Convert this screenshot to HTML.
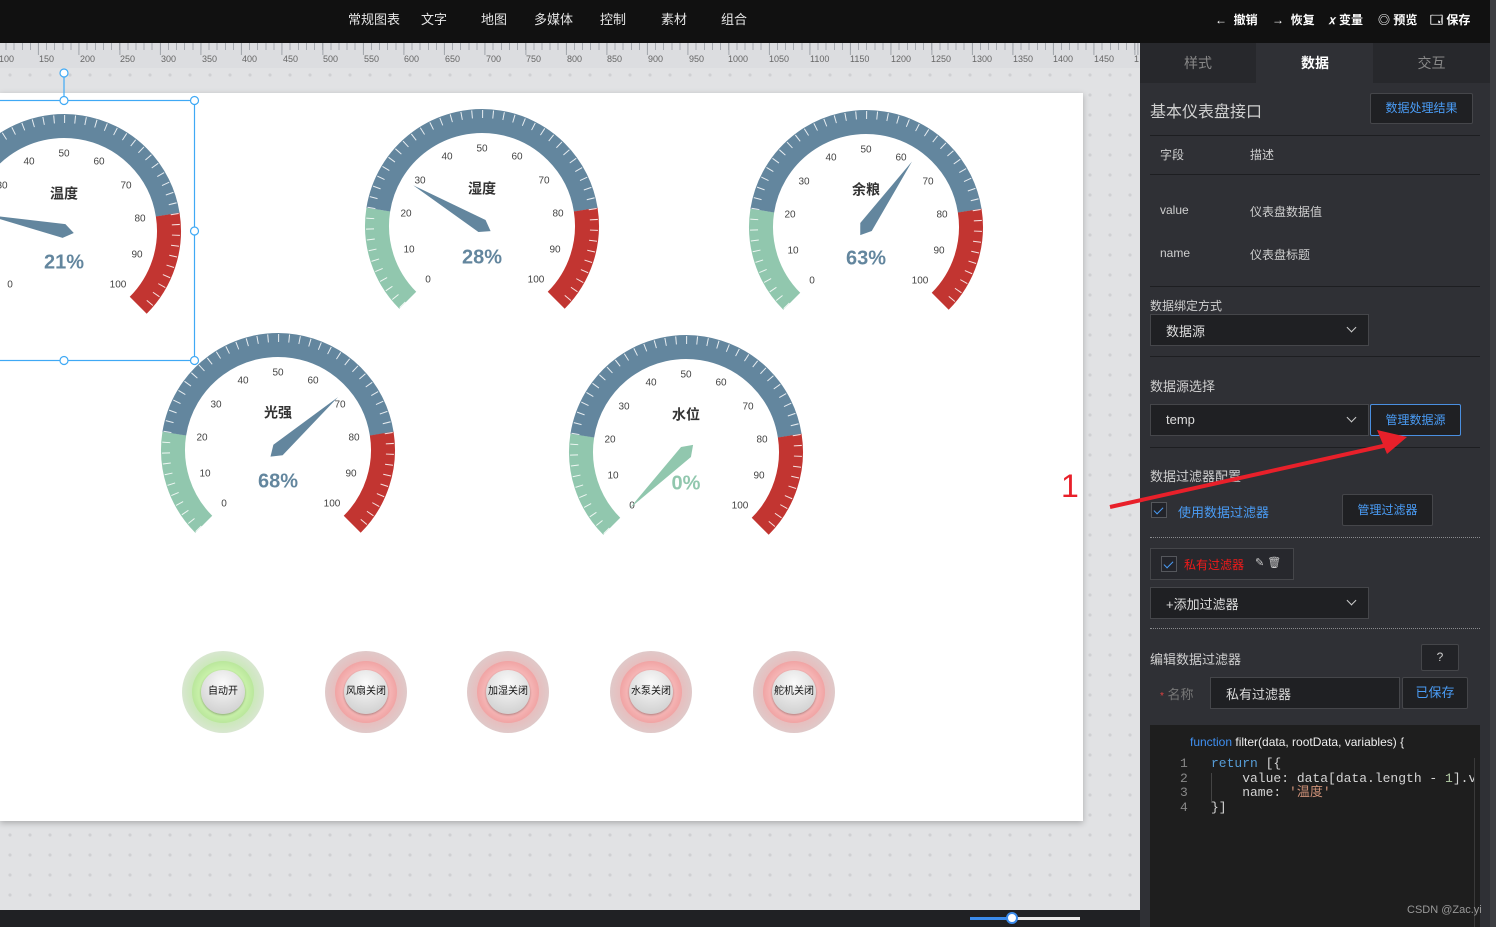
<!DOCTYPE html>
<html><head><meta charset="utf-8">
<style>
*{margin:0;padding:0;box-sizing:border-box}
body{width:1496px;height:927px;overflow:hidden;background:#e1e2e4;font-family:"Liberation Sans","Noto Sans CJK SC",sans-serif;position:relative}
.a{position:absolute;white-space:nowrap}
#top{left:0;top:0;width:1490px;height:43px;background:#111}
.nav{top:9px;font-size:13px;color:#e6e6e6}
.tb{top:11px;font-size:12px;color:#fff;font-weight:bold}
#canvas{left:0;top:43px;width:1140px;height:867px;background-color:#e1e2e4;background-image:radial-gradient(circle,#cfd0d3 1.2px,transparent 2px);background-size:20px 20px;background-position:0 2px}
#ruler{left:0;top:43px;width:1140px;height:25px;background:#dcdde0;
background-image:repeating-linear-gradient(90deg,#a8acb2 0 1px,transparent 1px 8.12px);background-size:100% 7px;background-repeat:no-repeat;background-position:-2.6px 0}
#ruler2{left:0;top:43px;width:1140px;height:12px;background-image:repeating-linear-gradient(90deg,#a0a4aa 0 1px,transparent 1px 40.6px);background-position:-2.6px 0}
.rl{top:54px;font-size:9px;color:#666}
#board{left:0;top:93px;width:1083px;height:728px;background:#fff;box-shadow:0 2px 6px rgba(0,0,0,.25)}
#bottom{left:0;top:910px;width:1150px;height:17px;background:#202124}
#panel{left:1140px;top:43px;width:350px;height:884px;background:#2f3035}
#sb{left:1490px;top:0;width:6px;height:927px;background:#3d3e42}
.tab{top:43px;height:40px;width:116px;text-align:center;line-height:40px;font-size:14px;color:#888;background:#27282c}
.t{font-size:12px;color:#cfcfcf}
.hl{height:1px;background:#1d1e21;left:1150px;width:330px}
.dl{border-top:1px dotted #8a8b8f;left:1150px;width:330px;height:0}
.sel{background:#1f2023;border:1px solid #45464a;height:32px}
.btn{background:#1f2023;border:1px solid #45464a;color:#4a9cf5;font-size:12px;text-align:center;border-radius:2px}
.chev{width:7px;height:7px;border-right:1.3px solid #ccc;border-bottom:1.3px solid #ccc;transform:rotate(45deg)}
.cb{width:16px;height:16px;border:1px solid #55575c;background:#23242a}
.cb:after{content:"";position:absolute;left:4px;top:2px;width:4px;height:8px;border-right:1.3px solid #4a9cf5;border-bottom:1.3px solid #4a9cf5;transform:rotate(45deg)}
.code{font-family:"Liberation Mono",monospace;font-size:13px;color:#d4d4d4}
.ln{font-family:"Liberation Mono",monospace;font-size:13px;color:#888}
.sw{width:82px;height:82px;border-radius:50%}
.sw .r{position:absolute;left:10px;top:10px;width:62px;height:62px;border-radius:50%}
.sw .i{position:absolute;left:19px;top:19px;width:44px;height:44px;border-radius:50%;background:radial-gradient(circle at 50% 30%,#fafafa,#dcdcdc 60%,#c8c8c8);box-shadow:0 1px 2px rgba(0,0,0,.3);font-size:10px;color:#111;text-align:center;line-height:44px}
</style></head><body>
<div class="a" id="canvas"></div>
<div class="a" id="ruler"></div>
<div class="a" id="ruler2"></div>
<div class="a rl" style="left:-1px">100</div><div class="a rl" style="left:39px">150</div><div class="a rl" style="left:80px">200</div><div class="a rl" style="left:120px">250</div><div class="a rl" style="left:161px">300</div><div class="a rl" style="left:202px">350</div><div class="a rl" style="left:242px">400</div><div class="a rl" style="left:283px">450</div><div class="a rl" style="left:323px">500</div><div class="a rl" style="left:364px">550</div><div class="a rl" style="left:404px">600</div><div class="a rl" style="left:445px">650</div><div class="a rl" style="left:486px">700</div><div class="a rl" style="left:526px">750</div><div class="a rl" style="left:567px">800</div><div class="a rl" style="left:607px">850</div><div class="a rl" style="left:648px">900</div><div class="a rl" style="left:689px">950</div><div class="a rl" style="left:728px">1000</div><div class="a rl" style="left:769px">1050</div><div class="a rl" style="left:810px">1100</div><div class="a rl" style="left:850px">1150</div><div class="a rl" style="left:891px">1200</div><div class="a rl" style="left:931px">1250</div><div class="a rl" style="left:972px">1300</div><div class="a rl" style="left:1013px">1350</div><div class="a rl" style="left:1053px">1400</div><div class="a rl" style="left:1094px">1450</div><div class="a rl" style="left:1134px">1</div>
<div class="a" id="board"></div>

<svg class="a" style="left:0;top:0" width="1140" height="910" font-family="Liberation Sans, Noto Sans CJK SC, sans-serif">
<g transform="translate(64,231)">
<circle r="105" fill="none" stroke="#91c7ae" stroke-width="24" stroke-dasharray="98.96 600" transform="rotate(135)"/>
<circle r="105" fill="none" stroke="#63869e" stroke-width="24" stroke-dasharray="296.9 400" transform="rotate(189)"/>
<circle r="105" fill="none" stroke="#c23531" stroke-width="24" stroke-dasharray="98.96 600" transform="rotate(351)"/>
<circle r="112" fill="none" stroke="#fff" stroke-opacity=".85" stroke-width="8" stroke-dasharray="1 9.556" transform="rotate(135)"/>
<g font-size="10" fill="#444" text-anchor="middle" dominant-baseline="middle"><text x="-54" y="54">0</text><text x="-73" y="24">10</text><text x="-76" y="-12">20</text><text x="-62" y="-45">30</text><text x="-35" y="-69">40</text><text x="0" y="-77">50</text><text x="35" y="-69">60</text><text x="62" y="-45">70</text><text x="76" y="-12">80</text><text x="73" y="24">90</text><text x="54" y="54">100</text></g>
<text y="-36" font-size="14" font-weight="bold" fill="#333" text-anchor="middle" dominant-baseline="middle">温度</text>
<polygon points="-10,0 0,-7 80,0 0,7" fill="#63869e" transform="rotate(-168.3)"/>
<text y="32" font-size="20" font-weight="bold" fill="#63869e" text-anchor="middle" dominant-baseline="middle">21%</text>
</g>
<g transform="translate(482,226)">
<circle r="105" fill="none" stroke="#91c7ae" stroke-width="24" stroke-dasharray="98.96 600" transform="rotate(135)"/>
<circle r="105" fill="none" stroke="#63869e" stroke-width="24" stroke-dasharray="296.9 400" transform="rotate(189)"/>
<circle r="105" fill="none" stroke="#c23531" stroke-width="24" stroke-dasharray="98.96 600" transform="rotate(351)"/>
<circle r="112" fill="none" stroke="#fff" stroke-opacity=".85" stroke-width="8" stroke-dasharray="1 9.556" transform="rotate(135)"/>
<g font-size="10" fill="#444" text-anchor="middle" dominant-baseline="middle"><text x="-54" y="54">0</text><text x="-73" y="24">10</text><text x="-76" y="-12">20</text><text x="-62" y="-45">30</text><text x="-35" y="-69">40</text><text x="0" y="-77">50</text><text x="35" y="-69">60</text><text x="62" y="-45">70</text><text x="76" y="-12">80</text><text x="73" y="24">90</text><text x="54" y="54">100</text></g>
<text y="-36" font-size="14" font-weight="bold" fill="#333" text-anchor="middle" dominant-baseline="middle">湿度</text>
<polygon points="-10,0 0,-7 80,0 0,7" fill="#63869e" transform="rotate(-149.4)"/>
<text y="32" font-size="20" font-weight="bold" fill="#63869e" text-anchor="middle" dominant-baseline="middle">28%</text>
</g>
<g transform="translate(866,227)">
<circle r="105" fill="none" stroke="#91c7ae" stroke-width="24" stroke-dasharray="98.96 600" transform="rotate(135)"/>
<circle r="105" fill="none" stroke="#63869e" stroke-width="24" stroke-dasharray="296.9 400" transform="rotate(189)"/>
<circle r="105" fill="none" stroke="#c23531" stroke-width="24" stroke-dasharray="98.96 600" transform="rotate(351)"/>
<circle r="112" fill="none" stroke="#fff" stroke-opacity=".85" stroke-width="8" stroke-dasharray="1 9.556" transform="rotate(135)"/>
<g font-size="10" fill="#444" text-anchor="middle" dominant-baseline="middle"><text x="-54" y="54">0</text><text x="-73" y="24">10</text><text x="-76" y="-12">20</text><text x="-62" y="-45">30</text><text x="-35" y="-69">40</text><text x="0" y="-77">50</text><text x="35" y="-69">60</text><text x="62" y="-45">70</text><text x="76" y="-12">80</text><text x="73" y="24">90</text><text x="54" y="54">100</text></g>
<text y="-36" font-size="14" font-weight="bold" fill="#333" text-anchor="middle" dominant-baseline="middle">余粮</text>
<polygon points="-10,0 0,-7 80,0 0,7" fill="#63869e" transform="rotate(-54.9)"/>
<text y="32" font-size="20" font-weight="bold" fill="#63869e" text-anchor="middle" dominant-baseline="middle">63%</text>
</g>
<g transform="translate(278,450)">
<circle r="105" fill="none" stroke="#91c7ae" stroke-width="24" stroke-dasharray="98.96 600" transform="rotate(135)"/>
<circle r="105" fill="none" stroke="#63869e" stroke-width="24" stroke-dasharray="296.9 400" transform="rotate(189)"/>
<circle r="105" fill="none" stroke="#c23531" stroke-width="24" stroke-dasharray="98.96 600" transform="rotate(351)"/>
<circle r="112" fill="none" stroke="#fff" stroke-opacity=".85" stroke-width="8" stroke-dasharray="1 9.556" transform="rotate(135)"/>
<g font-size="10" fill="#444" text-anchor="middle" dominant-baseline="middle"><text x="-54" y="54">0</text><text x="-73" y="24">10</text><text x="-76" y="-12">20</text><text x="-62" y="-45">30</text><text x="-35" y="-69">40</text><text x="0" y="-77">50</text><text x="35" y="-69">60</text><text x="62" y="-45">70</text><text x="76" y="-12">80</text><text x="73" y="24">90</text><text x="54" y="54">100</text></g>
<text y="-36" font-size="14" font-weight="bold" fill="#333" text-anchor="middle" dominant-baseline="middle">光强</text>
<polygon points="-10,0 0,-7 80,0 0,7" fill="#63869e" transform="rotate(-41.4)"/>
<text y="32" font-size="20" font-weight="bold" fill="#63869e" text-anchor="middle" dominant-baseline="middle">68%</text>
</g>
<g transform="translate(686,452)">
<circle r="105" fill="none" stroke="#91c7ae" stroke-width="24" stroke-dasharray="98.96 600" transform="rotate(135)"/>
<circle r="105" fill="none" stroke="#63869e" stroke-width="24" stroke-dasharray="296.9 400" transform="rotate(189)"/>
<circle r="105" fill="none" stroke="#c23531" stroke-width="24" stroke-dasharray="98.96 600" transform="rotate(351)"/>
<circle r="112" fill="none" stroke="#fff" stroke-opacity=".85" stroke-width="8" stroke-dasharray="1 9.556" transform="rotate(135)"/>
<g font-size="10" fill="#444" text-anchor="middle" dominant-baseline="middle"><text x="-54" y="54">0</text><text x="-73" y="24">10</text><text x="-76" y="-12">20</text><text x="-62" y="-45">30</text><text x="-35" y="-69">40</text><text x="0" y="-77">50</text><text x="35" y="-69">60</text><text x="62" y="-45">70</text><text x="76" y="-12">80</text><text x="73" y="24">90</text><text x="54" y="54">100</text></g>
<text y="-36" font-size="14" font-weight="bold" fill="#333" text-anchor="middle" dominant-baseline="middle">水位</text>
<polygon points="-10,0 0,-7 80,0 0,7" fill="#91c7ae" transform="rotate(-225)"/>
<text y="32" font-size="20" font-weight="bold" fill="#91c7ae" text-anchor="middle" dominant-baseline="middle">0%</text>
</g>
<g fill="#fff" stroke="#3fa9f5" stroke-width="1.2">
<rect x="-2" y="100.5" width="196.5" height="260" fill="none"/>
<line x1="64" y1="73" x2="64" y2="100"/>
<circle cx="64" cy="73" r="4"/><circle cx="64" cy="100.5" r="4"/><circle cx="194.5" cy="100.5" r="4"/><circle cx="194.5" cy="231" r="4"/><circle cx="194.5" cy="360.5" r="4"/><circle cx="64" cy="360.5" r="4"/>
</g>
</svg>

<div class="a sw" style="left:182px;top:651px;background:radial-gradient(circle,#c9e8b6 50%,#dfe6dc 80%,#e0e0e0)"><div class="r" style="background:radial-gradient(circle,#c7f0a8 55%,#b6e498 75%,#cde1c3)"></div><div class="i">自动开</div></div>
<div class="a sw" style="left:325px;top:651px;background:radial-gradient(circle,#e8bcbc 50%,#dccfcf 80%,#ddd)"><div class="r" style="background:radial-gradient(circle,#f5b4b4 55%,#ef9f9f 75%,#dcb8b8)"></div><div class="i">风扇关闭</div></div>
<div class="a sw" style="left:467px;top:651px;background:radial-gradient(circle,#e8bcbc 50%,#dccfcf 80%,#ddd)"><div class="r" style="background:radial-gradient(circle,#f5b4b4 55%,#ef9f9f 75%,#dcb8b8)"></div><div class="i">加湿关闭</div></div>
<div class="a sw" style="left:610px;top:651px;background:radial-gradient(circle,#e8bcbc 50%,#dccfcf 80%,#ddd)"><div class="r" style="background:radial-gradient(circle,#f5b4b4 55%,#ef9f9f 75%,#dcb8b8)"></div><div class="i">水泵关闭</div></div>
<div class="a sw" style="left:753px;top:651px;background:radial-gradient(circle,#e8bcbc 50%,#dccfcf 80%,#ddd)"><div class="r" style="background:radial-gradient(circle,#f5b4b4 55%,#ef9f9f 75%,#dcb8b8)"></div><div class="i">舵机关闭</div></div>

<div class="a" id="bottom"></div>
<div class="a" style="left:970px;top:917px;width:110px;height:3px;background:#e6e6e6"></div>
<div class="a" style="left:970px;top:917px;width:42px;height:3px;background:#3b8beb"></div>
<div class="a" style="left:1006px;top:912px;width:12px;height:12px;border-radius:50%;background:#fff;border:2px solid #3b8beb"></div>

<div class="a" id="top"></div>
<div class="a nav" style="left:348px">常规图表</div><div class="a nav" style="left:421px">文字</div><div class="a nav" style="left:481px">地图</div><div class="a nav" style="left:534px">多媒体</div><div class="a nav" style="left:600px">控制</div><div class="a nav" style="left:661px">素材</div><div class="a nav" style="left:721px">组合</div>
<div class="a tb" style="left:1215px">←&nbsp; 撤销</div><div class="a tb" style="left:1272px">→&nbsp; 恢复</div><div class="a tb" style="left:1329px">𝑥 变量</div><div class="a tb" style="left:1378px">◎ 预览</div><div class="a tb" style="left:1430px">🗔 保存</div>

<div class="a" id="panel"></div>
<div class="a tab" style="left:1140px">样式</div><div class="a tab" style="left:1257px;background:#2f3035;color:#fff;font-weight:bold">数据</div><div class="a tab" style="left:1373px;width:117px">交互</div>
<div class="a" style="left:1150px;top:98px;font-size:16px;color:#d0d0d0">基本仪表盘接口</div>
<div class="a btn" style="left:1370px;top:93px;width:103px;height:31px;line-height:29px">数据处理结果</div>
<div class="a hl" style="top:135px"></div>
<div class="a t" style="left:1160px;top:146px">字段</div><div class="a t" style="left:1250px;top:146px">描述</div>
<div class="a hl" style="top:174px"></div>
<div class="a t" style="left:1160px;top:203px">value</div><div class="a t" style="left:1250px;top:203px">仪表盘数据值</div>
<div class="a t" style="left:1160px;top:246px">name</div><div class="a t" style="left:1250px;top:246px">仪表盘标题</div>
<div class="a hl" style="top:286px"></div>
<div class="a t" style="left:1150px;top:297px">数据绑定方式</div>
<div class="a sel" style="left:1150px;top:314px;width:219px"></div>
<div class="a" style="left:1166px;top:321px;font-size:13px;color:#ddd">数据源</div><div class="a chev" style="left:1348px;top:324px"></div>
<div class="a hl" style="top:356px"></div>
<div class="a" style="left:1150px;top:376px;font-size:13px;color:#cfcfcf">数据源选择</div>
<div class="a sel" style="left:1150px;top:404px;width:219px"></div>
<div class="a" style="left:1166px;top:412px;font-size:13px;color:#ddd">temp</div><div class="a chev" style="left:1348px;top:414px"></div>
<div class="a btn" style="left:1370px;top:404px;width:91px;height:32px;line-height:30px;border-color:#4a8fe0">管理数据源</div>
<div class="a hl" style="top:447px"></div>
<div class="a" style="left:1150px;top:466px;font-size:13px;color:#cfcfcf">数据过滤器配置</div>
<div class="a cb" style="left:1151px;top:502px"></div>
<div class="a" style="left:1178px;top:502px;font-size:13px;color:#4a9cf5">使用数据过滤器</div>
<div class="a btn" style="left:1342px;top:494px;width:91px;height:32px;line-height:30px">管理过滤器</div>
<div class="a dl" style="top:537px"></div>
<div class="a" style="left:1150px;top:548px;width:144px;height:32px;background:#27282d;border:1px solid #45464a"></div>
<div class="a cb" style="left:1161px;top:556px"></div>
<div class="a" style="left:1184px;top:556px;font-size:12px;color:#f01a1a">私有过滤器</div>
<div class="a" style="left:1255px;top:556px;font-size:11px;color:#ccc">✎ 🗑</div>
<div class="a sel" style="left:1150px;top:587px;width:219px"></div>
<div class="a" style="left:1166px;top:594px;font-size:13px;color:#ddd">+添加过滤器</div><div class="a chev" style="left:1348px;top:597px"></div>
<div class="a dl" style="top:628px"></div>
<div class="a" style="left:1150px;top:649px;font-size:13px;color:#cfcfcf">编辑数据过滤器</div>
<div class="a btn" style="left:1421px;top:644px;width:38px;height:27px;line-height:25px;color:#ccc;background:#222327">?</div>
<div class="a" style="left:1160px;top:684px;font-size:13px;color:#777"><span style="color:#e04040;font-size:10px">*</span> 名称</div>
<div class="a" style="left:1210px;top:677px;width:190px;height:32px;background:#1f2023;border:1px solid #45464a"></div>
<div class="a" style="left:1226px;top:684px;font-size:13px;color:#ddd">私有过滤器</div>
<div class="a btn" style="left:1402px;top:677px;width:66px;height:32px;line-height:30px;font-size:13px">已保存</div>
<div class="a" style="left:1150px;top:725px;width:330px;height:202px;background:#1e1e1e"></div>
<div class="a" style="left:1474px;top:758px;width:1px;height:169px;background:#3a3a3a"></div>
<div class="a" style="left:1190px;top:735px;font-size:12px;color:#eee"><span style="color:#3f8ff0">function</span> filter(data, rootData, variables) {</div>
<div class="a ln" style="left:1180px;top:757px;line-height:14.5px">1<br>2<br>3<br>4</div>
<div class="a" style="left:1211px;top:773px;width:1px;height:30px;background:#444"></div>
<div class="a code" style="left:1211px;top:757px;line-height:14.5px;width:263px;overflow:hidden"><span style="color:#569cd6">return</span> [{<br>&nbsp;&nbsp;&nbsp;&nbsp;value: data[data.length - <span style="color:#b5cea8">1</span>].value,<br>&nbsp;&nbsp;&nbsp;&nbsp;name: <span style="color:#ce9178">'温度'</span><br>}]</div>
<div class="a" style="left:1407px;top:904px;font-size:11px;color:#999">CSDN @Zac.yi</div>
<div class="a" id="sb"></div>

<svg class="a" style="left:1040px;top:420px" width="400" height="110" font-family="Liberation Sans, sans-serif">
<line x1="70" y1="87" x2="352" y2="24" stroke="#e8202a" stroke-width="4"/>
<polygon points="367,17 337,10 347,34" fill="#e8202a"/>
<text x="21" y="77" font-size="32" fill="#e8202a">1</text>
</svg>
</body></html>
